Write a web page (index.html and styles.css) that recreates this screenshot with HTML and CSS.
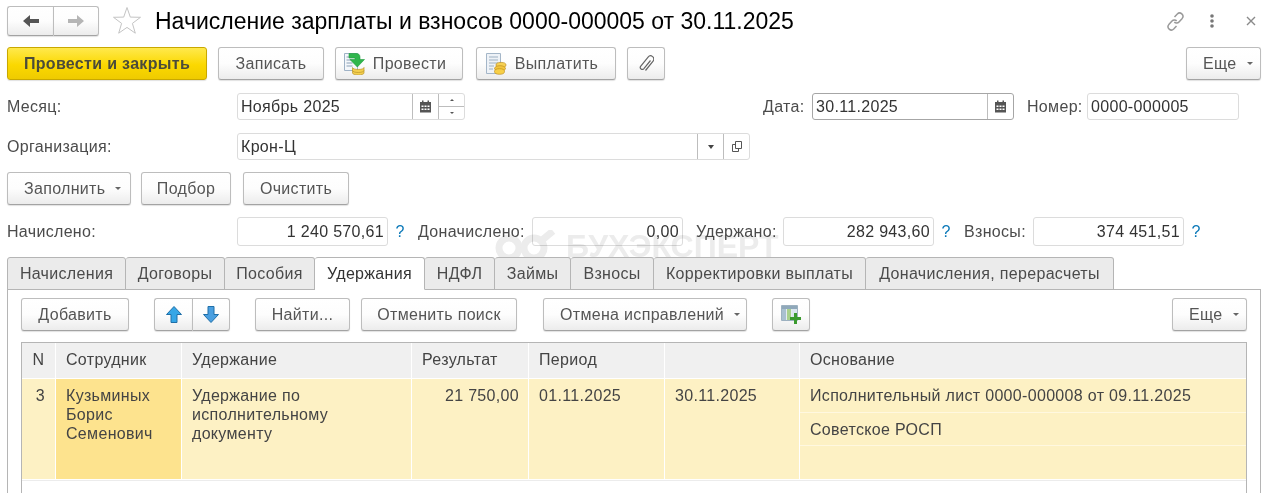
FILE: index.html
```html
<!DOCTYPE html>
<html lang="ru">
<head>
  <meta charset="UTF-8">
  <title>Начисление зарплаты и взносов</title>
  <link rel="stylesheet" href="styles.css">
</head>
<body>
  <div class="page">

    <div class="header">
      <div class="btn-group nav-group">
        <button class="btn nav-btn">
          <svg width="18" height="14" viewBox="0 0 18 14"><path d="M1 7l7-6v4h9v4H8v4z" fill="#555"/></svg>
        </button>
        <button class="btn nav-btn">
          <svg width="18" height="14" viewBox="0 0 18 14"><path d="M17 7l-7-6v4H1v4h9v4z" fill="#b5b5b5"/></svg>
        </button>
      </div>
      <svg class="star" width="30" height="30" viewBox="0 0 30 30"><path d="M15 1.5l3.300 9.600 10.200.2-8.100 6.100 2.900 9.800-8.300-5.800-8.300 5.800 2.900-9.800-8.100-6.100 10.200-.2z" fill="#fff" stroke="#c4c4c4"/></svg>
      <h1 class="title">Начисление зарплаты и взносов 0000-000005 от 30.11.2025</h1>
      <div class="header-icons">
        <svg width="19" height="19" viewBox="0 0 19 19" fill="none" stroke="#9a9a9a" stroke-width="1.500"><path d="M8.500 5l2.800-3a3.300 3.300 0 0 1 4.900 4.400l-3.200 3.500a3.300 3.300 0 0 1-4.700.2"/><path d="M10.500 14l-2.800 3a3.300 3.300 0 0 1-4.900-4.400l3.200-3.500a3.300 3.300 0 0 1 4.700-.2"/></svg>
        <svg class="dots" width="4" height="14" viewBox="0 0 4 14"><circle cx="2" cy="2" r="1.800" fill="#777"/><circle cx="2" cy="7" r="1.800" fill="#777"/><circle cx="2" cy="12" r="1.800" fill="#777"/></svg>
        <svg class="close" width="10" height="10" viewBox="0 0 10 10"><path d="M1 1l8 8M9 1l-8 8" stroke="#8a8a8a" stroke-width="1.400"/></svg>
      </div>
    </div>

    <div class="toolbar main-toolbar">
      <button class="btn btn-primary">Провести и закрыть</button>
      <button class="btn w-106">Записать</button>
      <button class="btn w-128 with-icon">
        <svg width="21" height="22" viewBox="0 0 21 22"><path d="M.5 .5h13v17H.5z" fill="#f4f7fb" stroke="#9fb2c6"/><path d="M2.500 4h6M2.500 7h5M2.500 10h6M2.500 13h6" stroke="#8aa0b6"/><path d="M8.500 14.500c0 1.100 2.700 2 5.800 2s5.700-.9 5.700-2v5.500c0 1.100-2.600 2-5.700 2s-5.800-.9-5.800-2z" fill="#f4cf4f" stroke="#b9952a" stroke-width=".7"/><path d="M8.500 17.500c0 1.100 2.700 2 5.800 2s5.700-.9 5.700-2" fill="none" stroke="#b9952a" stroke-width=".7"/><path d="M5 .5h7c3 0 4 1.500 4 4v2h4.500l-7.200 7.500-7.300-7.500H11V5H5z" fill="#2fb64c" stroke="#1e9a3c" stroke-width=".6"/></svg>
        Провести
      </button>
      <button class="btn w-140 with-icon pay-btn">
        <svg width="21" height="22" viewBox="0 0 21 22"><path d="M.5 .5h14v20H.5z" fill="#eef2f7" stroke="#a4b6c8"/><path d="M3 4h9M3 7h9M3 10h9M3 13h5M3 16h4" stroke="#9db0c2"/><ellipse cx="15" cy="12" rx="5" ry="2.600" fill="#f6d154" stroke="#c08f20" stroke-width=".7"/><ellipse cx="14" cy="15.500" rx="5.500" ry="2.800" fill="#f2c53d" stroke="#c08f20" stroke-width=".7"/><ellipse cx="13.500" cy="18.500" rx="5" ry="2.800" fill="#f7cf47" stroke="#c08f20" stroke-width=".7"/></svg>
        Выплатить
      </button>
      <button class="btn w-38">
        <svg width="16" height="18" viewBox="0 0 16 18" fill="none" stroke="#666" stroke-width="1.200"><path d="M12.500 5.500l-6.800 8.300a2 2 0 0 1-3.100-2.500l7.500-9.200a3.200 3.200 0 0 1 5 4l-7.600 9.400"/></svg>
      </button>
      <button class="btn has-caret w-75 push-right">Еще <i class="caret"></i></button>
    </div>

    <div class="row row-month">
      <label class="label w-230">Месяц:</label>
      <div class="field w-228">
        <span class="field-text">Ноябрь 2025</span>
        <span class="field-btn"><svg class="cal" width="13" height="13" viewBox="0 0 13 13"><path d="M1 2h11v10.500H1z" fill="#555"/><path d="M3 .5h1.500V3H3zM8.500.5H10V3H8.500z" fill="#555"/><path d="M2.500 5.500h2v1.500h-2zM5.500 5.500h2v1.500h-2zM8.500 5.500h2v1.500h-2zM2.500 8.500h2V10h-2zM5.500 8.500h2V10h-2zM8.500 8.500h2V10h-2z" fill="#fff"/></svg></span>
        <span class="field-btn spin"><i class="spin-up"></i><i class="spin-down"></i></span>
      </div>
      <label class="label date-label">Дата:</label>
      <div class="field w-202 field-dark">
        <span class="field-text">30.11.2025</span>
        <span class="field-btn"><svg class="cal" width="13" height="13" viewBox="0 0 13 13"><path d="M1 2h11v10.500H1z" fill="#555"/><path d="M3 .5h1.500V3H3zM8.500.5H10V3H8.500z" fill="#555"/><path d="M2.500 5.500h2v1.500h-2zM5.500 5.500h2v1.500h-2zM8.500 5.500h2v1.500h-2zM2.500 8.500h2V10h-2zM5.500 8.500h2V10h-2zM8.500 8.500h2V10h-2z" fill="#fff"/></svg></span>
      </div>
      <label class="label number-label">Номер:</label>
      <div class="field w-152"><span class="field-text">0000-000005</span></div>
    </div>

    <div class="row row-org">
      <label class="label w-230">Организация:</label>
      <div class="field w-513">
        <span class="field-text">Крон-Ц</span>
        <span class="field-btn"><i class="caret caret-dark"></i></span>
        <span class="field-btn">
          <svg width="12" height="13" viewBox="0 0 12 13" fill="none" stroke="#555"><path d="M4.500 1.500h6v7h-6z"/><path d="M4.500 4.500h-3v7h6v-3"/></svg>
        </span>
      </div>
    </div>

    <div class="toolbar row-fill">
      <button class="btn has-caret w-124">Заполнить <i class="caret"></i></button>
      <button class="btn w-90 fill-second">Подбор</button>
      <button class="btn w-106 fill-third">Очистить</button>
    </div>

    <div class="row row-sum">
      <label class="label w-230">Начислено:</label>
      <div class="field w-151 num"><span class="field-text">1 240 570,61</span></div>
      <span class="help">?</span>
      <label class="label w-114">Доначислено:</label>
      <div class="field w-151 num"><span class="field-text">0,00</span></div>
      <label class="label w-87 sum-third">Удержано:</label>
      <div class="field w-151 num"><span class="field-text">282 943,60</span></div>
      <span class="help">?</span>
      <label class="label w-69">Взносы:</label>
      <div class="field w-151 num"><span class="field-text">374 451,51</span></div>
      <span class="help">?</span>
    </div>

    <div class="tabs">
      <div class="tab t1">Начисления</div>
      <div class="tab t2">Договоры</div>
      <div class="tab t3">Пособия</div>
      <div class="tab t4 active">Удержания</div>
      <div class="tab t5">НДФЛ</div>
      <div class="tab t6">Займы</div>
      <div class="tab t7">Взносы</div>
      <div class="tab t8">Корректировки выплаты</div>
      <div class="tab t9">Доначисления, перерасчеты</div>
    </div>

    <div class="panel">
      <div class="toolbar panel-toolbar">
        <button class="btn w-108">Добавить</button>
        <div class="btn-group arrows">
          <button class="btn arrow-btn">
            <svg width="16" height="17" viewBox="0 0 16 17"><path d="M8 .5l7.500 8H11v8H5v-8H.5z" fill="#35a6e6" stroke="#1f6fa8"/></svg>
          </button>
          <button class="btn arrow-btn">
            <svg width="16" height="17" viewBox="0 0 16 17"><path d="M8 16.500l7.500-8H11v-8H5v8H.5z" fill="#4a9fe0" stroke="#1f6fa8"/></svg>
          </button>
        </div>
        <button class="btn w-95 find-btn">Найти...</button>
        <button class="btn w-156">Отменить поиск</button>
        <button class="btn has-caret w-204 undo-btn">Отмена исправлений <i class="caret"></i></button>
        <button class="btn w-38 grid-btn">
          <svg width="20" height="19" viewBox="0 0 20 19"><path d="M.5 .5h16v15H.5z" fill="#e3ebf1" stroke="#9db1c0"/><path d="M1 1h15v3H1z" fill="#8fa8ba"/><path d="M1 4h4v11H1z" fill="#a9c0d0"/><path d="M6 4h4v11H6z" fill="#a8d08d"/><path d="M11 4h5v11h-5z" fill="#dbe6ee"/><path d="M13 8h3v4h4v3h-4v4h-3v-4H9v-3h4z" fill="#3a9a2e"/></svg>
        </button>
        <button class="btn has-caret w-75 push-right">Еще <i class="caret"></i></button>
      </div>

      <div class="table">
        <div class="grid-row head">
          <div class="cell center">N</div>
          <div class="cell">Сотрудник</div>
          <div class="cell">Удержание</div>
          <div class="cell">Результат</div>
          <div class="cell">Период</div>
          <div class="cell"></div>
          <div class="cell">Основание</div>
        </div>
        <div class="grid-row data">
          <div class="cell right-n">3</div>
          <div class="cell selected">Кузьминых<br>Борис<br>Семенович</div>
          <div class="cell">Удержание по<br>исполнительному<br>документу</div>
          <div class="cell amount">21 750,00</div>
          <div class="cell">01.11.2025</div>
          <div class="cell">30.11.2025</div>
          <div class="cell stacked">
            <div class="sub">Исполнительный лист 0000-000008 от 09.11.2025</div>
            <div class="sub">Советское РОСП</div>
            <div class="sub"></div>
          </div>
        </div>
      </div>
    </div>

    <div class="watermark">
      <svg width="62" height="34" viewBox="0 0 62 34" fill="none" stroke="#ececec" stroke-width="7"><circle cx="14" cy="18" r="10"/><circle cx="39" cy="18" r="10"/><path d="M46 11l12-10"/></svg>
      <span>БУХЭКСПЕРТ</span>
    </div>
  </div>
</body>
</html>
```

FILE: styles.css
```css
* {
  box-sizing: border-box;
}

html, body {
  margin: 0;
  height: 493px;
  overflow: hidden;
  background: #fff;
}

body {
  font-family: "Liberation Sans", Arial, sans-serif;
  font-size: 16px;
  letter-spacing: 0.32px;
  color: #4b4b4b;
}

.page {
  position: relative;
  height: 493px;
  padding: 6px 9px 0 7px;
  display: flex;
  flex-direction: column;
}

/* header */
.header {
  display: flex;
  align-items: center;
  height: 30px;
}

.star {
  margin-left: 13px;
  flex: none;
}

.title {
  margin: 0 0 0 13px;
  font-size: 23px;
  font-weight: normal;
  letter-spacing: 0;
  color: #000;
  white-space: nowrap;
}

.header-icons {
  margin-left: auto;
  display: flex;
  align-items: center;
  padding-right: 5px;
}

.dots {
  margin-left: 25px;
}

.close {
  margin-left: 32px;
}

/* buttons */
.btn {
  height: 33px;
  padding: 0;
  border: 1px solid #bdbdbd;
  border-bottom-color: #a3a3a3;
  border-radius: 3px;
  background: linear-gradient(#fff, #fdfdfd 50%, #ececec);
  box-shadow: 0 1px 1px rgba(0, 0, 0, 0.12);
  font: inherit;
  letter-spacing: inherit;
  color: #555;
  display: inline-flex;
  align-items: center;
  justify-content: center;
  white-space: nowrap;
  flex: none;
}

.btn-primary {
  width: 200px;
  font-weight: bold;
  color: #4b4b3a;
  border-color: #c9a800;
  background: linear-gradient(#ffe94d, #fbd800 55%, #efcb00);
}

.btn-group {
  display: flex;
  flex: none;
}

.btn-group .btn:first-child {
  border-radius: 3px 0 0 3px;
  border-right-width: 0;
}

.btn-group .btn:last-child {
  border-radius: 0 3px 3px 0;
}

.nav-group .btn {
  height: 30px;
}

.nav-btn {
  width: 46px;
}

.arrow-btn {
  width: 38px;
}

.with-icon {
  padding-right: 8px;
}

.with-icon svg {
  margin-right: 8px;
}

.has-caret {
  justify-content: flex-start;
  padding-left: 16px;
}

.caret {
  display: inline-block;
  margin-left: 10px;
  border: 3px solid transparent;
  border-top: 3px solid #666;
  border-bottom: 0;
}

.caret-dark {
  margin: 0;
  border-top-color: #444;
  border-width: 4px 3px 0;
}

.toolbar {
  display: flex;
  align-items: center;
}

.main-toolbar {
  margin-top: 11px;
}

.main-toolbar > .btn + .btn {
  margin-left: 11px;
}

.main-toolbar > .btn.pay-btn {
  margin-left: 13px;
}

.w-38 { width: 38px; }
.w-69 { width: 69px; }
.w-75 { width: 75px; }
.w-87 { width: 87px; }
.w-90 { width: 90px; }
.w-95 { width: 95px; }
.w-106 { width: 106px; }
.w-108 { width: 108px; }
.w-114 { width: 114px; }
.w-124 { width: 124px; }
.w-128 { width: 128px; }
.w-140 { width: 140px; }
.w-151 { width: 151px; }
.w-152 { width: 152px; }
.w-156 { width: 156px; }
.w-202 { width: 202px; }
.w-204 { width: 204px; }
.w-228 { width: 228px; }
.w-230 { width: 230px; }
.w-513 { width: 513px; }

/* fields */
.row {
  display: flex;
  align-items: center;
  height: 27px;
}

.row-month {
  margin-top: 13px;
}

.row-org {
  margin-top: 13px;
}

.row-fill {
  margin-top: 12px;
}

.fill-second {
  margin-left: 10px;
}

.fill-third {
  margin-left: 12px;
}

.row-sum {
  margin-top: 12px;
  height: 29px;
}

.label {
  flex: none;
  white-space: nowrap;
}

.date-label {
  margin-left: 298px;
  width: 49px;
}

.number-label {
  margin-left: 13px;
  width: 60px;
}

.sum-third {
  margin-left: 13px;
}

.field {
  display: flex;
  height: 100%;
  flex: none;
  border: 1px solid #dcdcdc;
  border-radius: 3px;
  background: #fff;
  color: #333;
}

.field-dark {
  border-color: #a6a6a6;
}

.field-text {
  flex: 1;
  padding: 0 3px;
  line-height: 25px;
  white-space: nowrap;
}

.row-sum .field-text {
  line-height: 27px;
}

.num {
  text-align: right;
}

.field-btn {
  flex: none;
  width: 26px;
  display: flex;
  align-items: center;
  justify-content: center;
  border-left: 1px solid #bdbdbd;
}

.spin {
  flex-direction: column;
  align-items: stretch;
}

.spin i {
  flex: 1;
  display: block;
  position: relative;
}

.spin-up {
  border-bottom: 1px solid #bdbdbd;
}

.spin-up::after,
.spin-down::after {
  content: "";
  position: absolute;
  left: 11px;
  top: 5px;
  border: 2.5px solid transparent;
}

.spin-up::after {
  border-bottom-color: #555;
  border-top: 0;
}

.spin-down::after {
  border-top-color: #555;
  border-bottom: 0;
}

.help {
  flex: none;
  width: 30px;
  margin-left: -3px;
  margin-right: 3px;
  text-align: center;
  color: #0a78b8;
  font-size: 16px;
}

/* tabs */
.tabs {
  display: flex;
  margin-top: 11px;
  height: 33px;
  position: relative;
  z-index: 2;
}

.tab {
  height: 33px;
  border: 1px solid #b5b5b5;
  border-left-width: 0;
  border-radius: 3px 3px 0 0;
  background: #ebebeb;
  text-align: center;
  line-height: 31px;
  white-space: nowrap;
  flex: none;
}

.tab:first-child {
  border-left-width: 1px;
}

.tab.active {
  background: #fff;
  border-bottom-color: #fff;
  color: #333;
  position: relative;
  z-index: 1;
}

.t1 { width: 119px; }
.t2 { width: 99px; }
.t3 { width: 90px; }
.t4 { width: 110px; }
.t5 { width: 70px; }
.t6 { width: 76px; }
.t7 { width: 83px; }
.t8 { width: 212px; }
.t9 { width: 248px; }

.panel {
  flex: 1;
  margin-top: -1px;
  padding: 8px 13px 0;
  border: 1px solid #b5b5b5;
  border-bottom: 0;
  display: flex;
  flex-direction: column;
}

.arrows {
  margin-left: 25px;
}

.panel-toolbar {
  flex: none;
}

.find-btn {
  margin-left: 25px;
}

.panel-toolbar > .btn + .btn {
  margin-left: 11px;
}

.panel-toolbar > .btn.undo-btn {
  margin-left: 26px;
}

.panel-toolbar > .btn.grid-btn {
  margin-left: 25px;
}

.toolbar > .btn.push-right {
  margin-left: auto;
}

/* table */
.table {
  flex: 1;
  margin-top: 11px;
  border: 1px solid #b5b5b5;
  border-bottom: 0;
}

.grid-row {
  display: grid;
  grid-template-columns: 33px 125px 229px 116px 135px 134px 1fr;
  column-gap: 1px;
}

.head {
  height: 35px;
  margin-bottom: 1px;
}

.head .cell {
  background: #f0f0f0;
  line-height: 33px;
  padding-top: 0;
}

.data {
  height: 102px;
  padding-bottom: 1px;
  border-bottom: 1px solid #ececec;
}

.cell {
  background: #fdf1c4;
  padding: 7px 10px 0;
  line-height: 19px;
  color: #444;
  white-space: nowrap;
}

.center {
  text-align: center;
  padding: 0;
}

.right-n {
  text-align: right;
  padding-right: 10px;
}

.amount {
  text-align: right;
  padding-right: 9px;
}

.selected {
  background: #fde38e;
}

.stacked {
  padding: 0;
  display: flex;
  flex-direction: column;
}

.sub {
  flex: 1;
  padding: 7px 10px 0;
  border-bottom: 1px solid #fff8e0;
}

.sub:last-child {
  border-bottom: 0;
}

/* watermark */
.watermark {
  position: absolute;
  left: 495px;
  top: 228px;
  z-index: 1;
  display: flex;
  align-items: center;
  pointer-events: none;
  mix-blend-mode: multiply;
}

.watermark span {
  margin-left: 9px;
  font-size: 32px;
  font-weight: bold;
  color: #ececec;
  letter-spacing: 0;
}
```
